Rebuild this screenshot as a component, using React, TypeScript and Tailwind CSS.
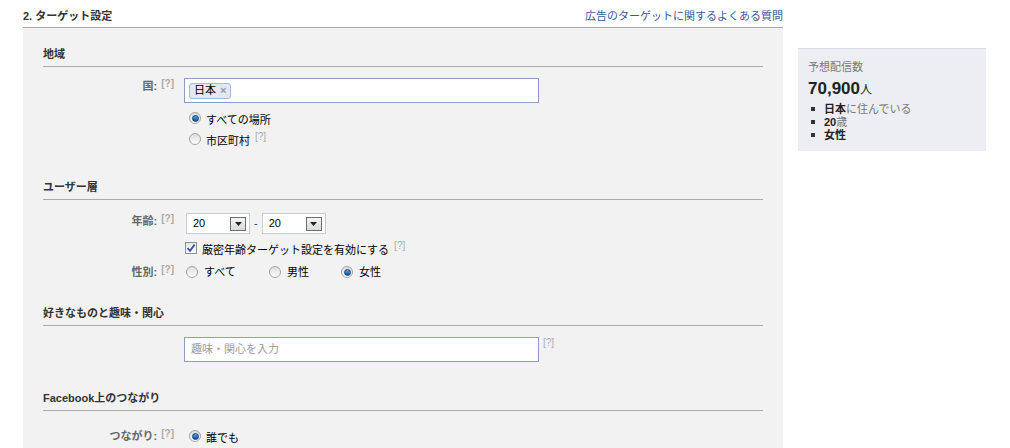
import React from 'react';

const font = { fontFamily: '"Liberation Sans", "Noto Sans CJK JP", sans-serif' };

function Help({ className = 'ml-1' }: { className?: string }) {
  return <span className={`text-[10px] leading-[12px] text-[#aaa] self-start ${className}`}>[?]</span>;
}

function Radio({ checked }: { checked?: boolean }) {
  return (
    <span className="inline-flex items-center justify-center w-[12px] h-[12px] rounded-full border border-[#a3a3a3] bg-gradient-to-b from-[#dcdcdc] to-white shrink-0">
      {checked && <span className="w-[7px] h-[7px] rounded-full bg-gradient-to-b from-[#5aa7e8] to-[#0d4f98] border border-[#0b3d78]" />}
    </span>
  );
}

function Checkbox() {
  return (
    <span className="inline-flex items-center justify-center w-[12px] h-[12px] border border-[#8e8f8f] bg-gradient-to-b from-[#e6e6e6] to-white shrink-0">
      <svg width="10" height="10" viewBox="0 0 10 10">
        <path d="M1.5 5.2 L4 7.8 L8.6 1.6" stroke="#3a4fa0" strokeWidth="1.8" fill="none" />
      </svg>
    </span>
  );
}

function Select({ value }: { value: string }) {
  return (
    <div className="flex items-center justify-between w-[64px] h-[21px] bg-white border border-[#c5cad3] pl-[6px] pr-[3px]">
      <span className="text-[11px] text-black">{value}</span>
      <span className="flex items-center justify-center w-[16px] h-[14px] border border-[#6d6d6d] bg-gradient-to-b from-[#f4f4f4] to-[#d9d9d9]">
        <svg width="7" height="4" viewBox="0 0 7 4"><path d="M0 0 H7 L3.5 4 Z" fill="#222" /></svg>
      </span>
    </div>
  );
}

function SectionHead({ title, className = '' }: { title: string; className?: string }) {
  return (
    <div className={`h-[39px] flex items-end pb-[4px] border-b border-[#aaa] text-[11px] leading-[16px] font-bold text-[#333] ${className}`}>
      {title}
    </div>
  );
}

function Row({ label, children, className = '' }: { label?: string; children: React.ReactNode; className?: string }) {
  return (
    <div className={`flex ${className}`}>
      <div className="w-[141px] shrink-0 flex justify-end items-start pr-[10px] text-[11px] leading-[16px] font-bold text-[#666]">
        {label && (
          <>
            <span>{label}</span>
            <Help />
          </>
        )}
      </div>
      <div className="flex-1">{children}</div>
    </div>
  );
}

function Option({ checked, label, help, className = '' }: { checked?: boolean; label?: string; help?: boolean; className?: string }) {
  return (
    <div className={`flex items-center gap-[5px] pl-[5px] h-[16px] text-[11px] leading-[16px] text-black ${className}`}>
      <Radio checked={checked} />
      {label && <span className="pt-[3px]">{label}</span>}
      {help && <Help className="" />}
    </div>
  );
}

export default function App() {
  return (
    <div className="w-[1010px] h-[448px] bg-white overflow-hidden flex text-[#333]" style={font}>
      <div className="w-[760px] ml-[23px] shrink-0">
        <div className="h-[28px] flex items-center justify-between border-b border-[#aaa] text-[11px] pt-[5px]">
          <span className="font-bold text-[#333]">2. ターゲット設定</span>
          <span className="text-[#3b5998]">広告のターゲットに関するよくある質問</span>
        </div>
        <div className="bg-[#f2f2f2] px-[20px] h-[420px]">
          <SectionHead title="地域" />
          <Row label="国:" className="mt-[11px]">
            <div className="w-[355px] h-[25px] bg-white border border-[#8a9ec4] flex items-center px-[4px]">
              <span className="flex items-center h-[16px] px-[4px] bg-[#e3e8f2] border border-[#a8b8d4] rounded-[3px] text-[11px] text-black">
                日本<span className="ml-[4px] text-[#8d9bb5] text-[11px] font-bold">×</span>
              </span>
            </div>
          </Row>
          <Row className="mt-[7px]">
            <Option checked label="すべての場所" />
            <Option label="市区町村" help className="mt-[5px]" />
          </Row>
          <SectionHead title="ユーザー層" className="mt-[14px]" />
          <Row label="年齢:" className="mt-[13px]">
            <div className="flex items-center pl-[2px]">
              <Select value="20" />
              <span className="mx-[4px] text-[11px]">-</span>
              <Select value="20" />
            </div>
          </Row>
          <Row className="mt-[6px]">
            <div className="flex items-center gap-[5px] pl-[1px] h-[16px] text-[11px] leading-[16px] text-black">
              <Checkbox />
              <span className="pt-[3px]">厳密年齢ターゲット設定を有効にする</span>
              <Help className="" />
            </div>
          </Row>
          <Row label="性別:" className="mt-[8px]">
            <div className="flex items-center pl-[2px] h-[16px] text-[11px] leading-[16px] text-black">
              <span className="flex items-center gap-[6px] w-[83px]"><Radio /><span>すべて</span></span>
              <span className="flex items-center gap-[6px] w-[72px]"><Radio /><span>男性</span></span>
              <span className="flex items-center gap-[6px]"><Radio checked /><span>女性</span></span>
            </div>
          </Row>
          <SectionHead title="好きなものと趣味・関心" className="mt-[7px]" />
          <Row className="mt-[11px]">
            <div className="flex items-start">
              <div className="w-[355px] h-[25px] bg-white border border-[#8a9ec4] flex items-center px-[6px] text-[11px] text-[#999]">
                趣味・関心を入力
              </div>
              <Help />
            </div>
          </Row>
          <SectionHead title="Facebook上のつながり" className="mt-[10px]" />
          <Row label="つながり:" className="mt-[17px]">
            <Option checked label="誰でも" />
            <Option className="mt-[5px]" />
          </Row>
        </div>
      </div>
      <div className="ml-[15px] mt-[48px] w-[188px] h-[103px] bg-[#edeef3] border-t border-[#d8dfea] px-[10px] pt-[10px]">
        <div className="text-[11px] text-[#777]">予想配信数</div>
        <div className="mt-[3px] font-bold text-[17px] text-[#222] leading-[20px]">
          70,900<span className="text-[12px] font-normal">人</span>
        </div>
        <ul className="mt-[3px] text-[11px] leading-[13px]">
          <li className="flex items-center"><span className="w-[4px] h-[4px] bg-[#333] mr-[9px] ml-[3px]" /><b className="text-[#222]">日本</b><span className="text-[#777]">に住んでいる</span></li>
          <li className="flex items-center"><span className="w-[4px] h-[4px] bg-[#333] mr-[9px] ml-[3px]" /><b className="text-[#222]">20</b><span className="text-[#777]">歳</span></li>
          <li className="flex items-center"><span className="w-[4px] h-[4px] bg-[#333] mr-[9px] ml-[3px]" /><b className="text-[#222]">女性</b></li>
        </ul>
      </div>
    </div>
  );
}
